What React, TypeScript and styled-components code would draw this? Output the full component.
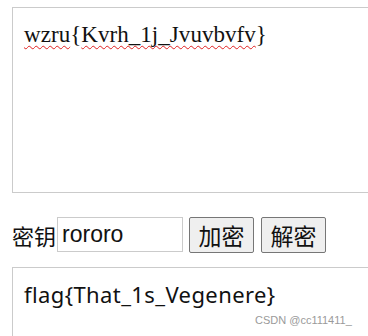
import React, { useState } from "react";
import styled, { createGlobalStyle } from "styled-components";

const GlobalStyle = createGlobalStyle`
  html, body {
    margin: 0;
    padding: 0;
    background: #fff;
    overflow: hidden;
  }
  body {
    width: 368px;
    height: 336px;
    position: relative;
    font-family: "Noto Sans", "Noto Sans CJK SC", sans-serif;
  }
`;

const Page = styled.div`
  padding: 7px 0 0 12px;
  width: 440px;
`;

const CipherBox = styled.div`
  box-sizing: border-box;
  width: 420px;
  height: 186px;
  border: 1px solid #cbcbcb;
  padding: 15px 11px;
  font-family: "Liberation Serif", "Noto Sans CJK SC", serif;
  font-size: 23px;
  letter-spacing: 0.05px;
  line-height: 1;
  color: #111;
`;

const Typo = styled.span`
  text-decoration: underline wavy #e02020;
  text-decoration-thickness: 1px;
  text-underline-offset: 3px;
  text-decoration-skip-ink: none;
`;

const Controls = styled.div`
  display: flex;
  align-items: center;
  margin-top: 23px;
  height: 37px;
`;

const Label = styled.span`
  font-family: "Noto Sans CJK SC", sans-serif;
  font-size: 22px;
  color: #111;
  margin-right: 1px;
`;

const KeyInput = styled.input`
  box-sizing: border-box;
  width: 126px;
  height: 35px;
  border: 1px solid #cbcbcb;
  padding: 0 4px;
  font-family: "Liberation Sans", sans-serif;
  font-size: 23px;
  color: #111;
  outline: none;
  margin-right: 6px;
`;

const Button = styled.button`
  box-sizing: border-box;
  height: 36px;
  width: 65px;
  padding: 0;
  margin-right: 7px;
  border: 1px solid #767676;
  border-radius: 2px;
  background: #efefef;
  font-family: "Noto Sans CJK SC", sans-serif;
  font-size: 23px;
  color: #111;
`;

const ResultBox = styled.div`
  box-sizing: border-box;
  margin-top: 14px;
  width: 420px;
  height: 120px;
  border: 1px solid #cbcbcb;
  padding: 11px 11px;
  font-family: "Noto Sans", sans-serif;
  font-size: 22px;
  letter-spacing: 0.4px;
  color: #111;
`;

const Watermark = styled.div`
  position: absolute;
  left: 255px;
  top: 314px;
  font-family: "Liberation Sans", sans-serif;
  font-size: 11px;
  color: #9a9a9a;
`;

export default function App() {
  const [key, setKey] = useState("rororo");

  return (
    <>
      <GlobalStyle />
      <Page>
        <CipherBox>
          <Typo>wzru</Typo>{"{"}<Typo>Kvrh_1j_Jvuvbvfv</Typo>{"}"}
        </CipherBox>
        <Controls>
          <Label>密钥</Label>
          <KeyInput value={key} onChange={(e) => setKey(e.target.value)} />
          <Button>加密</Button>
          <Button>解密</Button>
        </Controls>
        <ResultBox>flag{"{"}That_1s_Vegenere{"}"}</ResultBox>
      </Page>
      <Watermark>CSDN @cc111411_</Watermark>
    </>
  );
}
